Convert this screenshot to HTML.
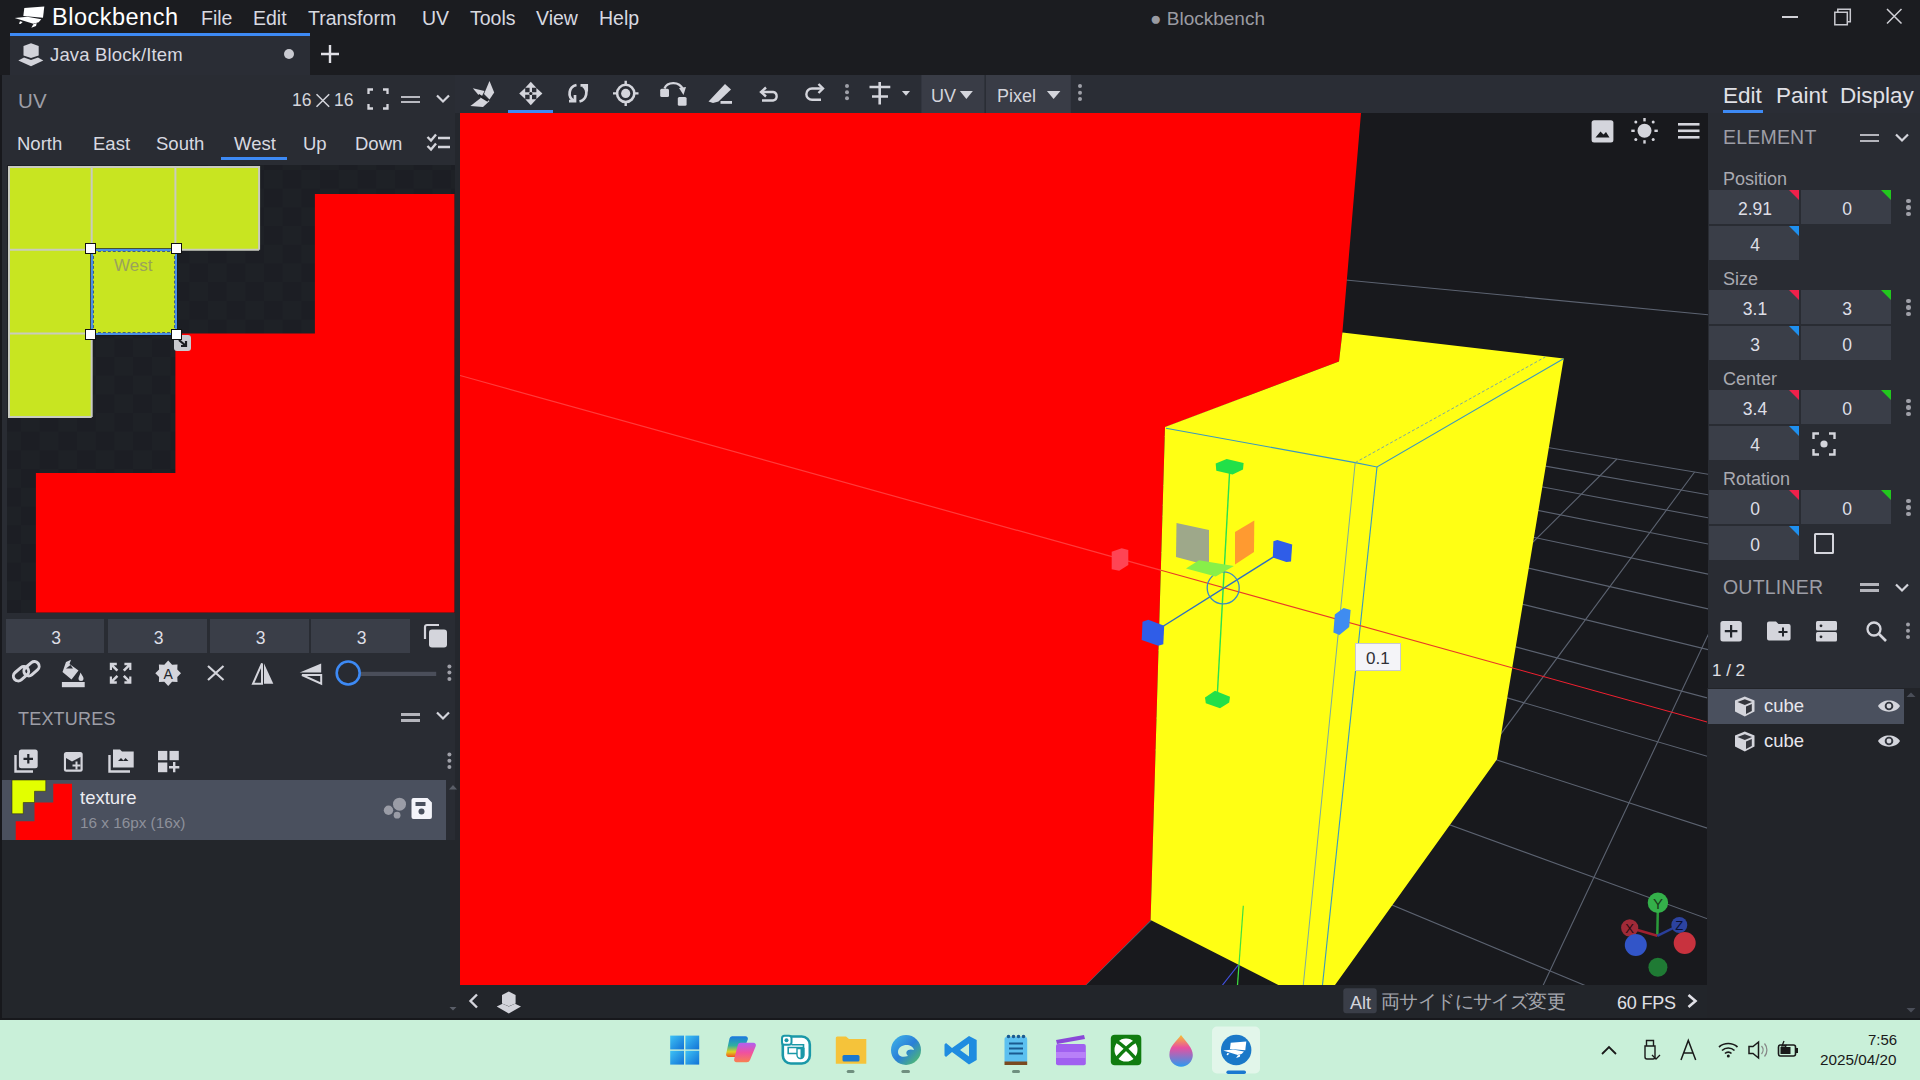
<!DOCTYPE html>
<html><head><meta charset="utf-8"><title>Blockbench</title>
<style>
*{box-sizing:border-box;margin:0;padding:0}
html,body{width:1920px;height:1080px;overflow:hidden;background:#1b1c20;font-family:"Liberation Sans",sans-serif;color:#d6d7de}
.a{position:absolute}
.t{position:absolute;white-space:nowrap;line-height:1}
svg{position:absolute;overflow:visible}
.ic{fill:#d4d5dc;stroke:none}
.st{fill:none;stroke:#d4d5dc}
.inp{position:absolute;background:#3a3e48;}
.inp span{position:absolute;left:2px;right:0;text-align:center;font-size:17.5px;top:8px;color:#dedee6}
.cr{position:absolute;top:0;right:0;width:0;height:0;border-style:solid;border-width:0 10px 10px 0}
.dots{position:absolute;width:4px}
.dots i{display:block;width:4.5px;height:4.5px;border-radius:2.25px;background:#9fa0a8;margin-bottom:2px}
.hdr{font-size:20.5px;color:#9d9ea6;letter-spacing:0.2px}
.lbl{font-size:17.5px;color:#a9aab1}
.menu{font-size:19.5px;color:#d8d9e0}
</style></head>
<body>
<!-- title bar -->
<div class="a" style="left:0;top:0;width:1920px;height:75px;background:#1b1c20"></div>
<!-- toolbar strip -->
<div class="a" style="left:0;top:75px;width:1920px;height:38px;background:#2a2d35"></div>
<!-- left panel -->
<div class="a" style="left:0;top:75px;width:2px;height:945px;background:#17181c"></div>
<div class="a" style="left:2px;top:75px;width:453px;height:945px;background:#292c33"></div>
<div class="a" style="left:455px;top:113px;width:5px;height:872px;background:#24272d"></div>
<div class="a" style="left:2px;top:840px;width:458px;height:178px;background:#23262b"></div>
<svg style="left:448px;top:1005px" width="10" height="8" viewBox="0 0 10 8"><path d="M1.5 2L5 5.5L8.5 2z" fill="#5a5e68"/></svg>
<div class="t" style="left:52px;top:6px;font-size:23.5px;color:#ffffff;letter-spacing:0.5px">Blockbench</div>
<div class="t menu" style="left:201px;top:9.2px">File</div>
<div class="t menu" style="left:253px;top:9.2px">Edit</div>
<div class="t menu" style="left:308px;top:9.2px">Transform</div>
<div class="t menu" style="left:422px;top:9.2px">UV</div>
<div class="t menu" style="left:470px;top:9.2px">Tools</div>
<div class="t menu" style="left:536px;top:9.2px">View</div>
<div class="t menu" style="left:599px;top:9.2px">Help</div>
<div class="t" style="left:1150px;top:9px;font-size:19px;color:#9a9ba2">&#9679; Blockbench</div>
<!-- tab -->
<div class="a" style="left:10px;top:33px;width:300px;height:42px;background:#2a2d35;border-top:3px solid #3d8af5"></div>
<div class="t" style="left:50px;top:46px;font-size:18.5px;color:#d8d9e0;letter-spacing:0.15px">Java Block/Item</div>
<div class="a" style="left:284px;top:49px;width:10px;height:10px;border-radius:5px;background:#c9cad1"></div>
<svg style="left:0;top:0" width="60" height="36" viewBox="0 0 60 36"><g fill="#ffffff"><path d="M24.3,8 L44.3,6.5 L43,17.7 L23.3,16 Z"/><path d="M14.7,18 L27.3,16.7 L41.3,19.3 L38.7,22.3 L33.3,23.7 Z"/><path d="M19,23.7 L20,21.3 L22.7,22 L20.5,24 Z"/><path d="M31.3,27.7 L33.3,24.3 L36.7,23 L36,26 Z"/></g></svg>
<svg style="left:0;top:36px" width="50" height="36" viewBox="0 36 50 36"><g fill="#d2d3da"><path d="M23.5,46 L31,43.3 L38.7,46 L38.7,55.5 L31,58 L23.5,55.5 Z"/><path d="M18.3,60.5 L24,57.5 L31,60 L38,57.5 L43.3,60.5 L31,66.3 Z"/></g></svg>
<svg style="left:320px;top:44px" width="20" height="20" viewBox="0 0 20 20"><path d="M10 1v18M1 10h18" stroke="#e0e0e6" stroke-width="2.4"/></svg>
<!-- toolbar icons -->
<svg style="left:460px;top:75px" width="640" height="38" viewBox="460 75 640 38">
<g fill="#d4d5dc">
<path d="M472.8,88.2 L484.5,91 L481,98 Z"/><path d="M470.4,106 L482,97 L489.5,101 L483,107 Z"/><path d="M489.5,81 L494.2,92.5 L489.5,99.5 L484,94 Z"/>
</g><path d="M478.5,95 L488,100.8" stroke="#1e2026" stroke-width="2.2"/>
<g fill="#d4d5dc">
<path d="M530.8,81.7 L536.3,87.8 L525.3,87.8 Z"/><path d="M530.8,105.3 L536.3,99.2 L525.3,99.2 Z"/>
<path d="M519.2,93.5 L525.2,88 L525.2,99 Z"/><path d="M542.4,93.5 L536.4,88 L536.4,99 Z"/>
</g><path d="M530.8,87 V100 M524.5,93.5 H537" stroke="#d4d5dc" stroke-width="2.4"/><circle cx="530.8" cy="93.5" r="1.6" fill="#1e2026"/>
<rect x="508" y="110" width="45" height="3" fill="#3d8af5"/>
<g fill="none" stroke="#d4d5dc" stroke-width="2.7">
<path d="M576.5,85 A8.5,8.5 0 0 0 574,100.8"/><path d="M579.5,101.5 A9.5,9 0 0 0 583,86"/>
<polyline points="569,101.2 575,101.2 575,95"/><polyline points="580.5,85.3 586.7,85.3 586.7,91.5"/>
</g>
<circle cx="625.7" cy="93.4" r="8.6" fill="none" stroke="#d4d5dc" stroke-width="2.6"/>
<circle cx="625.7" cy="93.4" r="4.6" fill="#d4d5dc"/>
<path d="M625.7,80.8v3.5M625.7,102.5v3.5M613,93.4h3.5M635,93.4h3.5" stroke="#d4d5dc" stroke-width="2.4"/>
<rect x="660.2" y="88.8" width="8.8" height="8.2" rx="1.5" fill="#d4d5dc"/>
<rect x="677.8" y="97" width="8.8" height="8.8" rx="1.5" fill="#d4d5dc"/>
<path d="M664.5,88.5 C667,82 679,80.5 683,89.5" fill="none" stroke="#d4d5dc" stroke-width="2.3"/>
<path d="M679,88 L686,87 L683.5,95 Z" fill="#d4d5dc"/>
<path d="M725,84 L731,89.5 L718.5,101.5 L713,103 L708.5,101.5 Z" fill="#d4d5dc"/>
<rect x="720.5" y="101" width="11.5" height="2.8" fill="#d4d5dc"/>
<g fill="none" stroke="#d4d5dc" stroke-width="2.4">
<path d="M761.5,92 H773 A4.3 4.3 0 0 1 773,100.5 H762"/><path d="M766,87.5 L761,92 L766,96.5"/>
<path d="M823,88.5 H812 A5.5 5.5 0 0 0 812,99.8 H821"/><path d="M818.5,84 L823,88.5 L818.5,93"/>
</g>
<g fill="#9fa0a8"><circle cx="847" cy="86.1" r="2"/><circle cx="847" cy="92.2" r="2"/><circle cx="847" cy="98.3" r="2"/></g>
<path d="M869.5,87 H890.3 M872,96.5 H888 M879.7,82 V104.4" stroke="#d4d5dc" stroke-width="2.6" fill="none"/>
<path d="M901.9,91 H910 L906,95.8 Z" fill="#d4d5dc"/>
<rect x="921.4" y="75" width="63" height="38" fill="#393c46"/>
<rect x="986" y="75" width="84.8" height="38" fill="#393c46"/>
<path d="M959.9,91.1 H972.9 L966.4,99 Z" fill="#d4d5dc"/>
<path d="M1046.9,91.1 H1060.4 L1053.6,99 Z" fill="#d4d5dc"/>
<g fill="#9fa0a8"><circle cx="1080" cy="86" r="2"/><circle cx="1080" cy="92.7" r="2"/><circle cx="1080" cy="99" r="2"/></g>
</svg>
<div class="t" style="left:931px;top:87px;font-size:18px;color:#d4d5dc">UV</div>
<div class="t" style="left:997px;top:87px;font-size:18px;color:#d4d5dc">Pixel</div>
<!-- window controls -->
<div class="a" style="left:1782px;top:16px;width:16px;height:1.5px;background:#d0d0d6"></div>
<svg style="left:1831.5px;top:6px" width="24" height="22" viewBox="0 0 24 22"><path d="M2.8 6.3h12.5v12.5H2.8z M5.8 6.3V3.3h12.5v12.5h-3" fill="none" stroke="#c8c8ce" stroke-width="1.5"/></svg>
<svg style="left:1885px;top:7px" width="20" height="20" viewBox="0 0 20 20"><path d="M2 2l14.5 14.5M16.5 2L2 16.5" stroke="#d0d0d6" stroke-width="1.5"/></svg>
<!-- right tabs -->
<div class="t" style="left:1723px;top:84.5px;font-size:22.5px;color:#e0e0e6">Edit</div>
<div class="t" style="left:1776px;top:84.5px;font-size:22.5px;color:#e0e0e6">Paint</div>
<div class="t" style="left:1840px;top:84.5px;font-size:22.5px;color:#e0e0e6">Display</div>
<div class="a" style="left:1723px;top:110px;width:40px;height:3px;background:#3d8af5"></div>



<!-- UV header -->
<div class="t hdr" style="left:18px;top:91px;font-size:20.5px">UV</div>
<div class="t" style="left:292px;top:92px;font-size:17.5px;color:#d4d5dc">16</div><div class="t" style="left:334px;top:92px;font-size:17.5px;color:#d4d5dc">16</div>
<svg style="left:314px;top:92px" width="18" height="17" viewBox="314 92 18 17"><path d="M316.5,94.2 L329.2,106.8 M329.2,94.2 L316.5,106.8" stroke="#d4d5dc" stroke-width="1.5"/></svg>
<svg style="left:367px;top:88px" width="22" height="22" viewBox="0 0 22 22"><path class="st" stroke="#b8b9c0" stroke-width="2.3" d="M1.5 6V1.5H6M16 1.5h4.5V6M20.5 16v4.5H16M6 20.5H1.5V16"/></svg>
<div class="a" style="left:401px;top:96px;width:19px;height:2.4px;background:#b8b9c0"></div>
<div class="a" style="left:401px;top:100.8px;width:19px;height:2.4px;background:#b8b9c0"></div>
<svg style="left:436px;top:94px" width="14" height="10" viewBox="0 0 14 10"><path class="st" stroke="#a9aab1" stroke-width="2.2" d="M1 1.5l6 6 6-6"/></svg>
<!-- face tabs -->
<div class="t" style="left:17px;top:135px;font-size:18.5px;color:#d8d9e0">North</div>
<div class="t" style="left:93px;top:135px;font-size:18.5px;color:#d8d9e0">East</div>
<div class="t" style="left:156px;top:135px;font-size:18.5px;color:#d8d9e0">South</div>
<div class="t" style="left:234px;top:135px;font-size:18.5px;color:#d8d9e0">West</div>
<div class="t" style="left:303px;top:135px;font-size:18.5px;color:#d8d9e0">Up</div>
<div class="t" style="left:355px;top:135px;font-size:18.5px;color:#d8d9e0">Down</div>
<div class="a" style="left:221px;top:157px;width:66px;height:3px;background:#3d8af5"></div>
<svg style="left:426px;top:133px" width="26" height="20" viewBox="0 0 26 20"><path class="st" stroke-width="2.4" d="M1.5 4l3.5 3.5L10 1.5M1.5 13l3.5 3.5L10 10.5"/><path class="st" stroke-width="2.6" d="M12 5h12M12 14h12"/></svg>
<!-- UV canvas -->
<div class="a" style="left:7px;top:165px;width:448px;height:448px;overflow:hidden;background-color:#1c1e24;background-image:conic-gradient(#1e2126 25%,transparent 25% 50%,#1e2126 50% 75%,transparent 75%);background-size:37.4px 37.4px;background-position:14px 5px">
<svg width="446.4" height="446.4" viewBox="0 0 448 448" style="left:1px;top:0.5px">
<polygon fill="#ff0000" points="308,28 448,28 448,448 28,448 28,308 168,308 168,168 308,168"/>
<polygon fill="#c8e521" points="0,0 252,0 252,84 168,84 168,168 84,168 84,252 0,252"/>
<g stroke="#c9cbbf" stroke-width="2" fill="none">
<path d="M1,1H252M0,84H252M0,168H84M0,252H84M1,0V252M84,0V252M168,0V84M252,0V84"/>
</g>
</svg>
</div>
<!-- west selection -->
<div class="a" style="left:89.5px;top:247.5px;width:88px;height:88px;border:1px solid rgba(20,24,30,0.7)"></div>
<div class="a" style="left:90.5px;top:248.5px;width:86px;height:86px;border:2px solid #4a8ee8"></div>
<div class="a" style="left:92.5px;top:250.5px;width:82px;height:82px;border:1px dashed #40607a"></div>
<div class="t" style="left:114px;top:257px;font-size:17px;color:#9aa25c">West</div>
<div class="a" style="left:174px;top:335px;width:17px;height:16px;background:#c9cacf;border-radius:3px"></div>
<svg style="left:176px;top:337px" width="13" height="12" viewBox="0 0 13 12"><path d="M3 3l7 6M10 4v5H5" stroke="#1a1b1f" stroke-width="2.2" fill="none"/></svg>
<div class="a" style="left:85px;top:243px;width:11px;height:11px;background:#fff;border:1.5px solid #111"></div>
<div class="a" style="left:171px;top:243px;width:11px;height:11px;background:#fff;border:1.5px solid #111"></div>
<div class="a" style="left:85px;top:329px;width:11px;height:11px;background:#fff;border:1.5px solid #111"></div>
<div class="a" style="left:171px;top:329px;width:11px;height:11px;background:#fff;border:1.5px solid #111"></div>

<!-- face inputs -->
<div class="inp" style="left:6px;top:619px;width:98px;height:34px"><span style="top:9px">3</span></div>
<div class="inp" style="left:108px;top:619px;width:99px;height:34px"><span style="top:9px">3</span></div>
<div class="inp" style="left:210px;top:619px;width:99px;height:34px"><span style="top:9px">3</span></div>
<div class="inp" style="left:311px;top:619px;width:99px;height:34px"><span style="top:9px">3</span></div>
<svg style="left:423px;top:624px" width="25" height="24" viewBox="0 0 25 24"><path class="st" stroke-width="2.2" d="M2 15V3a2 2 0 0 1 2-2h12"/><rect class="ic" x="6" y="5.5" width="18" height="18" rx="3"/></svg>
<!-- uv tool icons -->
<svg style="left:0;top:650px" width="460" height="200" viewBox="0 650 460 200">
<g fill="none" stroke="#d4d5dc" stroke-width="3">
<rect x="12.5" y="669" width="17" height="9.5" rx="4.75" transform="rotate(-40 21 673.7)"/>
<rect x="23" y="664" width="17" height="9.5" rx="4.75" transform="rotate(-40 31.5 668.7)"/>
</g>
<path d="M66,662 L71,659.8 L69.5,664 L78.5,670.5 L71.5,679.5 L62.5,672 Z" fill="#d4d5dc"/>
<path d="M66,668.5 L73,668.5 L70.5,665 Z" fill="#2a2d35"/>
<path d="M80.5,672.5 C82.5,676 83.5,677 83.5,678.5 A2.5 2.5 0 0 1 78.5,678.5 C78.5,677 79.5,676 80.5,672.5Z" fill="#d4d5dc"/>
<rect x="61.9" y="682" width="22.8" height="5.2" fill="#d4d5dc"/>
<g fill="#d4d5dc">
<path d="M109.8,662.8h7v2.5h-3l4.5,4.5-1.8,1.8-4.5-4.5v3h-2.2z"/>
<path d="M131.4,662.8h-7v2.5h3l-4.5,4.5 1.8,1.8 4.5-4.5v3h2.2z"/>
<path d="M109.8,683.7h7v-2.5h-3l4.5-4.5-1.8-1.8-4.5,4.5v-3h-2.2z"/>
<path d="M131.4,683.7h-7v-2.5h3l-4.5-4.5 1.8-1.8 4.5,4.5v-3h2.2z"/>
</g>
<path fill="#d4d5dc" d="M168.2,660.4 L172.1,664.8 L177.5,664.5 L177.3,669.6 L181,673.3 L177.3,677 L177.5,682.1 L172.1,681.8 L168.2,686.1 L164.3,681.8 L158.9,682.1 L159.1,677 L155.3,673.3 L159.1,669.6 L158.9,664.5 L164.3,664.8 Z"/>
<text x="168.2" y="679" font-size="14" text-anchor="middle" fill="#22252b" font-family="Liberation Sans">A</text>
<path d="M208,666 L223.5,680 M223.5,666 L208,680" stroke="#d4d5dc" stroke-width="2.2"/>
<path d="M262,663.4 L253,683.7 H262 Z" fill="none" stroke="#d4d5dc" stroke-width="2"/>
<path d="M264,663.4 L273.3,683.7 H264 Z" fill="#d4d5dc"/>
<path d="M321.2,663.4 L299.7,672.5 H321.2 Z" fill="#d4d5dc"/>
<path d="M321.2,675 H302 L321.2,683.7 Z" fill="none" stroke="#d4d5dc" stroke-width="2"/>
<rect x="360.8" y="671.8" width="75.4" height="4.2" fill="#4a4e5a"/>
<circle cx="348.2" cy="673" r="11.5" fill="#282b32" stroke="#3d8af5" stroke-width="2.6"/>
<g fill="#9fa0a8"><circle cx="449.4" cy="666.4" r="2"/><circle cx="449.4" cy="672.6" r="2"/><circle cx="449.4" cy="679" r="2"/></g>
<!-- textures icons -->
<path d="M15.5,755 V771.5 H33" fill="none" stroke="#d4d5dc" stroke-width="2.4"/>
<rect x="18.9" y="749.4" width="18.8" height="18.8" rx="2.5" fill="#d4d5dc"/>
<path d="M28.3,754 V763.5 M23.5,758.8 H33" stroke="#22252b" stroke-width="2.2"/>
<rect x="63.9" y="751.9" width="18.8" height="19.8" rx="2.5" fill="#d4d5dc"/>
<path d="M66,758 L72,761.5 L80.5,757 V769.5 H66 Z" fill="#2a2d35"/>
<path d="M76.5,761.5 V769.5 M72.5,765.5 H80.5" stroke="#d4d5dc" stroke-width="2"/>
<path d="M109.5,755 V771.5 H130" fill="none" stroke="#d4d5dc" stroke-width="2.4"/>
<path d="M113,749.4 H120 L122,751.5 H133.7 V767.5 H113 Z" fill="#d4d5dc"/>
<path d="M118,761 L121,758 L123.5,760.5 L125.5,758 L128.5,761 Z" fill="#22252b"/>
<g fill="#d4d5dc"><rect x="158" y="750.9" width="9.3" height="9.3"/><rect x="169.5" y="750.9" width="9.3" height="9.3"/><rect x="158" y="762.5" width="9.3" height="9.7"/></g>
<path d="M174.2,762 V772.2 M169,767.2 H179.3" stroke="#d4d5dc" stroke-width="2.4"/>
<g fill="#9fa0a8"><circle cx="449.4" cy="754.5" r="2"/><circle cx="449.4" cy="760.8" r="2"/><circle cx="449.4" cy="767" r="2"/></g>
</svg>
<!-- textures header -->
<div class="t hdr" style="left:18px;top:709.5px;font-size:18px">TEXTURES</div>
<div class="a" style="left:401px;top:713px;width:19px;height:2.5px;background:#b4b5bc"></div>
<div class="a" style="left:401px;top:719px;width:19px;height:2.5px;background:#b4b5bc"></div>
<svg style="left:436px;top:711px" width="14" height="10" viewBox="0 0 14 10"><path class="st" stroke="#a9aab1" stroke-width="2.2" d="M1 1.5l6 6 6-6"/></svg>
<!-- texture row -->
<div class="a" style="left:2px;top:780px;width:444px;height:60px;background:#4a505e"></div>
<svg style="left:12px;top:780px" width="60" height="60" viewBox="0 0 16 16" preserveAspectRatio="none"><polygon fill="#ff0000" points="11,1 16,1 16,16 1,16 1,11 6,11 6,6 11,6"/><polygon fill="#e2ff00" stroke="#2a2a10" stroke-width="0.15" points="0,0 9,0 9,3 6,3 6,6 3,6 3,9 0,9"/></svg>
<div class="t" style="left:80px;top:789px;font-size:18.5px;color:#ececf2">texture</div>
<div class="t" style="left:80px;top:815px;font-size:15.3px;color:#8e919b">16 x 16px (16x)</div>
<svg style="left:380px;top:795px" width="56" height="28" viewBox="380 795 56 28">
<circle cx="399.5" cy="804.2" r="6.5" fill="#9a9ca6"/><circle cx="388.5" cy="810.3" r="4.7" fill="#9a9ca6"/><circle cx="397.1" cy="815.2" r="3.4" fill="#9a9ca6"/>
<path d="M413.5,798 H427.5 L431.9,802.5 V817 A2 2 0 0 1 429.9,819.1 H413.5 A2 2 0 0 1 411.5,817 V800 A2 2 0 0 1 413.5,798 Z" fill="#f4f4fa"/>
<rect x="415.5" y="802" width="10" height="4" fill="#4a505e"/><circle cx="421.5" cy="811.5" r="3" fill="#4a505e"/>
</svg>
<svg style="left:448px;top:783px" width="10" height="8" viewBox="0 0 10 8"><path d="M1 6.5L5 2l4 4.5z" fill="#5a5e68"/></svg>



<!-- viewport -->
<div class="a" style="left:460px;top:113px;width:1248px;height:872px;background:#18191d;overflow:hidden">
<svg width="1920" height="1080" style="left:-460px;top:-113px">
<g stroke="#5c6371" stroke-width="1.1">
<line x1="2004.1" y1="1160.1" x2="352.4" y2="471.8"/>
<line x1="1996.0" y1="1023.9" x2="433.8" y2="454.7"/>
<line x1="1989.7" y1="919.7" x2="507.3" y2="439.2"/>
<line x1="1984.8" y1="837.4" x2="574.0" y2="425.1"/>
<line x1="1980.8" y1="770.7" x2="634.7" y2="412.3"/>
<line x1="1977.5" y1="715.6" x2="690.3" y2="400.6"/>
<line x1="1974.7" y1="669.3" x2="741.3" y2="389.8"/>
<line x1="1972.3" y1="629.9" x2="788.4" y2="379.9"/>
<line x1="1970.3" y1="595.9" x2="831.9" y2="370.7"/>
<line x1="1968.5" y1="566.3" x2="872.2" y2="362.2"/>
<line x1="1966.9" y1="540.3" x2="909.8" y2="354.3"/>
<line x1="1965.6" y1="517.2" x2="944.7" y2="346.9"/>
<line x1="1682.8" y1="1408.6" x2="1868.2" y2="501.0"/>
<line x1="1417.4" y1="1252.4" x2="1778.2" y2="485.9"/>
<line x1="1208.5" y1="1129.4" x2="1694.6" y2="472.0"/>
<line x1="1039.9" y1="1030.2" x2="1616.9" y2="459.0"/>
<line x1="900.9" y1="948.4" x2="1544.3" y2="446.9"/>
<line x1="784.3" y1="879.8" x2="1476.5" y2="435.6"/>
<line x1="685.2" y1="821.4" x2="1412.9" y2="425.0"/>
<line x1="599.8" y1="771.2" x2="1353.3" y2="415.1"/>
<line x1="525.5" y1="727.5" x2="1297.1" y2="405.7"/>
<line x1="460.3" y1="689.1" x2="1244.2" y2="396.9"/>
<line x1="402.6" y1="655.2" x2="1194.2" y2="388.5"/>
<line x1="351.2" y1="624.9" x2="1147.0" y2="380.6"/>
<line x1="305.1" y1="597.8" x2="1102.3" y2="373.2"/>
<line x1="263.5" y1="573.3" x2="1059.8" y2="366.1"/>
<line x1="225.7" y1="551.1" x2="1019.5" y2="359.4"/>
<line x1="191.4" y1="530.9" x2="981.2" y2="353.0"/>
<line x1="1954.8" y1="338.4" x2="1288.2" y2="274.5"/>
</g>
<line x1="460" y1="375.5" x2="1707" y2="722" stroke="#f02030" stroke-width="1"/>
<polygon fill="#ff0000" points="460,113 1361,113 1342.4,332.5 1339,361.6 1165,427 1150.6,920 1085.6,985 460,985"/>
<line x1="460" y1="375.5" x2="1165" y2="571.4" stroke="#ff3b3b" stroke-width="1.2"/>
<polygon fill="#ffff14" points="1165,427 1339,361.6 1342.4,332.5 1563.7,358.5 1497,759.3 1335,985 1278.3,985 1150.6,920"/>
<g fill="none" stroke="#3a98c0" stroke-width="1.1">
<polyline points="1166,428.3 1355.2,462.6 1377,467 1563.5,358.7"/>
<line x1="1377" y1="467" x2="1322.5" y2="985"/>
<line x1="1355.2" y1="462.6" x2="1303.3" y2="985" stroke="#6aa0b0" stroke-width="0.9"/>
<line x1="1355.2" y1="462.6" x2="1545.2" y2="357" stroke="#6aa0b0" stroke-width="0.9" stroke-dasharray="3,2"/>
</g>
<!-- red axis line over yellow -->
<line x1="1161" y1="570.3" x2="1512" y2="667.8" stroke="#e83a28" stroke-width="1.1"/>
<!-- world axis lines bottom -->
<line x1="1243.3" y1="905.8" x2="1237.5" y2="985" stroke="#3ee040" stroke-width="1.2"/>
<line x1="1238.3" y1="965" x2="1222.5" y2="985" stroke="#4050e0" stroke-width="1.2"/>
<!-- gizmo -->
<g>
<line x1="1229.7" y1="470" x2="1217.3" y2="695" stroke="#28e050" stroke-width="1.4"/>
<line x1="1153.2" y1="632.5" x2="1282.9" y2="551" stroke="#2f6fc0" stroke-width="1.4"/>
<circle cx="1223.2" cy="587.9" r="16" fill="none" stroke="#3a88c8" stroke-width="1.3"/>
<polygon fill="#9ea88a" points="1176.5,523 1209,530 1209,565.8 1176,557"/>
<polygon fill="#ff9a30" points="1235,532 1254.3,520.4 1254,552 1235,564.5"/>
<polygon fill="#88f048" points="1186,568.6 1198.9,560.2 1233.9,566 1215.7,576.4"/>
<polygon fill="#22e048" points="1215.7,463.6 1226.7,459 1243.6,463 1243,469.4 1232.6,474.6 1216.3,470.7"/>
<polygon fill="#22e048" points="1205,697.5 1215,690.8 1230,696.7 1229.2,702.5 1220,708.3 1205.8,703.3"/>
<polygon fill="#2f5de8" points="1142.5,621.7 1148.3,619.7 1164.2,625.8 1163.3,644.2 1158.3,645.8 1141.7,640"/>
<polygon fill="#2f5de8" points="1273.4,541.3 1277.3,540 1292.2,544.6 1291,561.5 1286.4,562.1 1272.8,557.6"/>
<polygon fill="#3f8cf0" points="1334.8,614.5 1343.6,608 1350.6,610 1349.2,627 1339.4,634.9 1333.4,632.6"/>
<polygon fill="#ff4454" points="1111.7,551.7 1121.7,548.3 1128.3,550 1128.3,565 1119.2,570.8 1111.7,569.2"/>
</g>
<!-- axis navigator -->
<g>
<line x1="1657.3" y1="935.8" x2="1657.9" y2="905" stroke="#2a9a3a" stroke-width="2.5"/>
<line x1="1657.3" y1="935.8" x2="1629.7" y2="927.8" stroke="#a02030" stroke-width="2.5"/>
<line x1="1657.3" y1="935.8" x2="1679.3" y2="925" stroke="#2a3f9a" stroke-width="2.5"/>
<circle cx="1657.9" cy="902.8" r="10.2" fill="#34b04a"/>
<circle cx="1629.7" cy="927.8" r="8.6" fill="#a02a38"/>
<circle cx="1679.3" cy="925" r="8" fill="#2c43a0"/>
<circle cx="1635.8" cy="945" r="11" fill="#3255c8"/>
<circle cx="1684.7" cy="943" r="11" fill="#c8323e"/>
<circle cx="1657.9" cy="967.3" r="9.5" fill="#1f7a34"/>
<text x="1657.9" y="908.5" font-size="15" text-anchor="middle" fill="#1a3a1a" font-family="Liberation Sans">Y</text>
<text x="1629.7" y="932.5" font-size="13" text-anchor="middle" fill="#2a0a10" font-family="Liberation Sans">X</text>
<text x="1679.3" y="929.5" font-size="13" text-anchor="middle" fill="#0a1030" font-family="Liberation Sans">Z</text>
</g>
</svg>
<!-- 0.1 label -->
<div class="a" style="left:895px;top:530px;width:46px;height:28px;background:#f4f4f8;border:1px solid #c8c8d0"><span class="t" style="left:10px;top:6px;font-size:17px;color:#303036">0.1</span></div>
</div>

<!-- right panel -->
<div class="a" style="left:1708px;top:113px;width:212px;height:907px;background:#292c33"></div>
<div class="a" style="left:1707px;top:688px;width:213px;height:332px;background:#222429"></div>
<div class="t hdr" style="left:1723px;top:128px;font-size:19.5px">ELEMENT</div>
<div class="a" style="left:1860px;top:133.5px;width:19px;height:2.5px;background:#b4b5bc"></div><div class="a" style="left:1860px;top:139.5px;width:19px;height:2.5px;background:#b4b5bc"></div>
<svg style="left:1895px;top:133px" width="14" height="10" viewBox="0 0 14 10"><path class="st" stroke="#a9aab1" stroke-width="2.2" d="M1 1.5l6 6 6-6"/></svg>
<div class="t lbl" style="left:1723px;top:170px;font-size:18px">Position</div>
<div class="inp" style="left:1709px;top:190px;width:90px;height:34px"><i class="cr" style="border-color:transparent #f0204a transparent transparent"></i><span style="top:8.5px">2.91</span></div>
<div class="inp" style="left:1801px;top:190px;width:90px;height:34px"><i class="cr" style="border-color:transparent #22c81e transparent transparent"></i><span style="top:8.5px">0</span></div>
<div class="inp" style="left:1709px;top:226px;width:90px;height:34px"><i class="cr" style="border-color:transparent #1e90f0 transparent transparent"></i><span style="top:8.5px">4</span></div>
<div class="dots" style="left:1906px;top:198.5px"><i></i><i></i><i></i></div>
<div class="t lbl" style="left:1723px;top:270px;font-size:18px">Size</div>
<div class="inp" style="left:1709px;top:290px;width:90px;height:34px"><i class="cr" style="border-color:transparent #f0204a transparent transparent"></i><span style="top:8.5px">3.1</span></div>
<div class="inp" style="left:1801px;top:290px;width:90px;height:34px"><i class="cr" style="border-color:transparent #22c81e transparent transparent"></i><span style="top:8.5px">3</span></div>
<div class="inp" style="left:1709px;top:326px;width:90px;height:34px"><i class="cr" style="border-color:transparent #1e90f0 transparent transparent"></i><span style="top:8.5px">3</span></div>
<div class="inp" style="left:1801px;top:326px;width:90px;height:34px"><span style="top:8.5px">0</span></div>
<div class="dots" style="left:1906px;top:298.5px"><i></i><i></i><i></i></div>
<div class="t lbl" style="left:1723px;top:370px;font-size:18px">Center</div>
<div class="inp" style="left:1709px;top:390px;width:90px;height:34px"><i class="cr" style="border-color:transparent #f0204a transparent transparent"></i><span style="top:8.5px">3.4</span></div>
<div class="inp" style="left:1801px;top:390px;width:90px;height:34px"><i class="cr" style="border-color:transparent #22c81e transparent transparent"></i><span style="top:8.5px">0</span></div>
<div class="inp" style="left:1709px;top:426px;width:90px;height:34px"><i class="cr" style="border-color:transparent #1e90f0 transparent transparent"></i><span style="top:8.5px">4</span></div>
<div class="dots" style="left:1906px;top:398.5px"><i></i><i></i><i></i></div>
<div class="t lbl" style="left:1723px;top:470px;font-size:18px">Rotation</div>
<div class="inp" style="left:1709px;top:490px;width:90px;height:34px"><i class="cr" style="border-color:transparent #f0204a transparent transparent"></i><span style="top:8.5px">0</span></div>
<div class="inp" style="left:1801px;top:490px;width:90px;height:34px"><i class="cr" style="border-color:transparent #22c81e transparent transparent"></i><span style="top:8.5px">0</span></div>
<div class="inp" style="left:1709px;top:526px;width:90px;height:34px"><i class="cr" style="border-color:transparent #1e90f0 transparent transparent"></i><span style="top:8.5px">0</span></div>
<div class="dots" style="left:1906px;top:498.5px"><i></i><i></i><i></i></div>
<svg style="left:1812px;top:432px" width="24" height="24" viewBox="0 0 24 24"><path class="st" stroke-width="2.4" d="M1.5 7V1.5H7M17 1.5h5.5V7M22.5 17v5.5H17M7 22.5H1.5V17"/><circle cx="12" cy="12" r="3.6" class="ic"/></svg>
<div class="a" style="left:1813.5px;top:533px;width:20.5px;height:20.5px;border:2.4px solid #d4d5dc;border-radius:1.5px"></div>
<div class="t hdr" style="left:1723px;top:578px;font-size:19.5px">OUTLINER</div>
<div class="a" style="left:1860px;top:583px;width:19px;height:2.5px;background:#b4b5bc"></div><div class="a" style="left:1860px;top:589px;width:19px;height:2.5px;background:#b4b5bc"></div>
<svg style="left:1895px;top:583px" width="14" height="10" viewBox="0 0 14 10"><path class="st" stroke="#a9aab1" stroke-width="2.2" d="M1 1.5l6 6 6-6"/></svg>
<svg style="left:1707px;top:610px" width="213" height="150" viewBox="1707 610 213 150">
<rect x="1720.4" y="621" width="21.4" height="20.5" rx="2.5" fill="#d4d5dc"/>
<path d="M1731.1,625 V637.5 M1724.8,631.2 H1737.4" stroke="#22252b" stroke-width="2.2"/>
<path d="M1767,623.5 A2 2 0 0 1 1769,621.5 H1776 L1778.5,624 H1788.5 A2 2 0 0 1 1790.6,626 V638.5 A2 2 0 0 1 1788.5,640.5 H1769 A2 2 0 0 1 1767,638.5 Z" fill="#d4d5dc"/>
<path d="M1783,627.5 V636.5 M1778.5,632 H1787.5" stroke="#22252b" stroke-width="2"/>
<rect x="1816" y="621" width="21" height="9.5" rx="1.5" fill="#d4d5dc"/><rect x="1816" y="632" width="21" height="9.5" rx="1.5" fill="#d4d5dc"/>
<circle cx="1821" cy="625.8" r="1.4" fill="#22252b"/><circle cx="1821" cy="636.8" r="1.4" fill="#22252b"/>
<circle cx="1874" cy="629" r="6.5" fill="none" stroke="#d4d5dc" stroke-width="2.3"/><path d="M1878.5,633.5 L1886,641" stroke="#d4d5dc" stroke-width="2.6"/>
<g fill="#9fa0a8"><circle cx="1908" cy="624.5" r="2"/><circle cx="1908" cy="630.8" r="2"/><circle cx="1908" cy="637" r="2"/></g>
<path d="M1906.5,697 L1911,692.5 L1915.5,697 Z" fill="#4a4e58"/>
<path d="M1906.5,1008 L1911,1012.5 L1915.5,1008 Z" fill="#4a4e58"/>
</svg>
<div class="t" style="left:1712px;top:661.5px;font-size:17px;color:#e0e0e6">1 / 2</div>
<div class="a" style="left:1708px;top:689px;width:196px;height:35px;background:#4a505e"></div>
<svg style="left:1734px;top:695.5px" width="22" height="21" viewBox="0 0 22 21"><path d="M10.8 0.5 L20.5 4.5 V15.5 L10.8 20.5 L1 15.5 V4.5 Z" fill="#d4d5dc"/><path d="M3.5 6 L10.8 9 L18 6 L10.8 3.2 Z" fill="#22252b" opacity="0.9"/><path d="M12 10.5 L17.8 8 V15 L12 18 Z" fill="#22252b" opacity="0.9"/></svg>
<div class="t" style="left:1764px;top:697px;font-size:18.5px;color:#e6e6ec">cube</div>
<svg style="left:1877px;top:696.5px" width="24" height="18" viewBox="0 0 24 18"><path d="M1 9 C5 1.5 19 1.5 23 9 C19 16.5 5 16.5 1 9Z" fill="#d4d5dc"/><circle cx="12" cy="9" r="4.3" fill="#33363e"/><circle cx="12" cy="9" r="2.4" fill="#d4d5dc"/></svg>
<svg style="left:1734px;top:730.5px" width="22" height="21" viewBox="0 0 22 21"><path d="M10.8 0.5 L20.5 4.5 V15.5 L10.8 20.5 L1 15.5 V4.5 Z" fill="#d4d5dc"/><path d="M3.5 6 L10.8 9 L18 6 L10.8 3.2 Z" fill="#22252b" opacity="0.9"/><path d="M12 10.5 L17.8 8 V15 L12 18 Z" fill="#22252b" opacity="0.9"/></svg>
<div class="t" style="left:1764px;top:731.7px;font-size:18.5px;color:#e6e6ec">cube</div>
<svg style="left:1877px;top:731.5px" width="24" height="18" viewBox="0 0 24 18"><path d="M1 9 C5 1.5 19 1.5 23 9 C19 16.5 5 16.5 1 9Z" fill="#d4d5dc"/><circle cx="12" cy="9" r="4.3" fill="#33363e"/><circle cx="12" cy="9" r="2.4" fill="#d4d5dc"/></svg>

<!-- status bar -->
<div class="a" style="left:460px;top:985px;width:1247px;height:34px;background:#22252a"></div>
<div class="a" style="left:0;top:1018px;width:1920px;height:2px;background:#17181c"></div>
<svg style="left:460px;top:985px" width="1250" height="35" viewBox="460 985 1250 35">
<path d="M477,994.5 L470.5,1001 L477,1007.5" fill="none" stroke="#d4d5dc" stroke-width="2.4"/>
<g fill="#d2d3da"><path d="M502,995 L508.8,991.6 L515.6,995 L515.6,1003.5 L508.8,1006.3 L502,1003.5 Z"/><path d="M496.7,1006.5 L502.5,1003.8 L508.8,1006.5 L515,1003.8 L521,1006.5 L508.8,1013.6 Z"/></g>
<rect x="1343.3" y="988.3" width="33.4" height="25" rx="3" fill="#3a3e48"/>
<path d="M1688.5,995 L1695.5,1001 L1688.5,1007" fill="none" stroke="#e0e0e6" stroke-width="2.6"/>
</svg>
<div class="t" style="left:1350px;top:994px;font-size:18px;color:#d4d5dc">Alt</div>
<div class="t" style="left:1381px;top:992.5px;font-size:18.5px;color:#a4a5ad;letter-spacing:-0.6px">両サイドにサイズ変更</div>
<div class="t" style="left:1617px;top:994px;font-size:18px;color:#e0e0e6;letter-spacing:-0.2px">60 FPS</div>
<!-- viewport icons -->
<svg style="left:1585px;top:113px" width="120" height="36" viewBox="1585 113 120 36">
<rect x="1591.6" y="120.2" width="21.8" height="22.4" rx="2.5" fill="#d4d5dc"/>
<path d="M1595.5,137.5 L1600.5,131.5 L1603.5,134.5 L1606,132 L1609.5,137.5 Z" fill="#1a1b1f"/>
<circle cx="1644.5" cy="130.8" r="7" fill="#d4d5dc"/>
<g fill="#d4d5dc"><rect x="1643.3" y="118" width="2.4" height="3.4"/><rect x="1643.3" y="140.2" width="2.4" height="3.4"/><rect x="1631.3" y="129.6" width="3.4" height="2.4"/><rect x="1654.4" y="129.6" width="3.4" height="2.4"/>
<circle cx="1635.8" cy="122.1" r="1.5"/><circle cx="1653.2" cy="122.1" r="1.5"/><circle cx="1635.8" cy="139.5" r="1.5"/><circle cx="1653.2" cy="139.5" r="1.5"/></g>
<g fill="#d4d5dc"><rect x="1678" y="123" width="21.5" height="2.6"/><rect x="1678" y="129.5" width="21.5" height="2.6"/><rect x="1678" y="136" width="21.5" height="2.6"/></g>
</svg>

<!-- taskbar -->
<div class="a" style="left:0;top:1020px;width:1920px;height:60px;background:#c9f0d9"></div>
<svg style="left:0;top:1020px" width="1920" height="60" viewBox="0 1020 1920 60">
<defs>
<linearGradient id="gw" x1="0" y1="0" x2="1" y2="1"><stop offset="0" stop-color="#3ec2f5"/><stop offset="1" stop-color="#1272d6"/></linearGradient>
<linearGradient id="gc1" x1="0" y1="0" x2="0" y2="1"><stop offset="0" stop-color="#1a78e0"/><stop offset="0.45" stop-color="#30b0a0"/><stop offset="0.75" stop-color="#e0d020"/><stop offset="1" stop-color="#f05020"/></linearGradient><linearGradient id="gc2" x1="0" y1="0" x2="0" y2="1"><stop offset="0" stop-color="#b060f0"/><stop offset="0.5" stop-color="#f050a0"/><stop offset="1" stop-color="#f88050"/></linearGradient>
<linearGradient id="ge" x1="0" y1="0" x2="1" y2="1"><stop offset="0" stop-color="#40b8e8"/><stop offset="0.5" stop-color="#2a7fd8"/><stop offset="1" stop-color="#58c858"/></linearGradient>
<linearGradient id="gp" x1="0" y1="0" x2="0" y2="1"><stop offset="0" stop-color="#f8c030"/><stop offset="0.4" stop-color="#e850a0"/><stop offset="1" stop-color="#2a9af0"/></linearGradient>
</defs>
<g fill="url(#gw)"><rect x="670.2" y="1035.6" width="13.8" height="13.8"/><rect x="685.4" y="1035.6" width="13.8" height="13.8"/><rect x="670.2" y="1050.8" width="13.8" height="13.8"/><rect x="685.4" y="1050.8" width="13.8" height="13.8"/></g>
<path d="M732,1036.3 H745.5 A2.5 2.5 0 0 1 747.8,1039.5 L741.5,1055 A3 3 0 0 1 738.8,1057 H728.5 A2.5 2.5 0 0 1 726.2,1053.8 L729.5,1038.5 A3 3 0 0 1 732,1036.3 Z" fill="url(#gc1)"/>
<path d="M740.5,1042.8 H753.5 A2.5 2.5 0 0 1 755.8,1046 L750,1060 A3.5 3.5 0 0 1 746.8,1062.3 H736.5 A2.5 2.5 0 0 1 734.2,1059 L737.8,1045 A3 3 0 0 1 740.5,1042.8 Z" fill="url(#gc2)"/>
<rect x="782.8" y="1036.5" width="27" height="27" rx="8" fill="#ffffff" stroke="#1a98a8" stroke-width="2.6"/>
<rect x="782" y="1035.7" width="9.5" height="9" rx="2.5" fill="#ffffff" stroke="#1a98a8" stroke-width="2"/>
<circle cx="786.5" cy="1040.2" r="2" fill="#1a98a8"/>
<path d="M791.5,1044.8 H803.5 V1047.5 H788.2 V1053.5 H797" fill="none" stroke="#1a98a8" stroke-width="1.6"/>
<path d="M797,1048.5 H804 V1055 A3.5 3.5 0 0 1 800.5,1058.5 A3.5 3.5 0 0 1 797,1055 Z" fill="#ffffff" stroke="#1a98a8" stroke-width="1.4"/>
<path d="M800.5,1048.5 H804 V1055 A3.5 3.5 0 0 1 800.5,1058.5 Z" fill="#1a98a8"/>
<path d="M835.8,1038 A1.5 1.5 0 0 1 837.3,1036.4 H846 L849,1039 H866.3 V1063.75 H835.8 Z" fill="#f5c33a"/>
<rect x="842.5" y="1055" width="17" height="6.5" rx="1.5" fill="#1a78d0"/>
<rect x="846.7" y="1070" width="7.8" height="3" rx="1.5" fill="#6f8f7f"/>
<circle cx="906" cy="1050" r="15" fill="url(#ge)"/>
<path d="M898,1052 C898,1044 912,1042 914,1050 C908,1048 904,1052 908,1056 C902,1058 898,1056 898,1052Z" fill="#c9f0d9"/>
<rect x="901.4" y="1070" width="8.6" height="3" rx="1.5" fill="#6f8f7f"/>
<path d="M969,1036 L976.7,1040 V1060 L969,1064.5 L952,1052 L946,1057 L944.5,1055.5 V1044.5 L946,1043 L952,1048 Z M969,1043.5 L960,1050 L969,1056.5 Z" fill="#1f8ce0"/>
<rect x="1004.5" y="1037" width="22.7" height="26" rx="2" fill="#5cc0f0"/>
<rect x="1004.5" y="1061.5" width="22.7" height="3.5" fill="#7a4a20"/>
<g fill="#1a5a90"><circle cx="1008.5" cy="1036.5" r="1.8"/><circle cx="1013.5" cy="1036.5" r="1.8"/><circle cx="1018.5" cy="1036.5" r="1.8"/><circle cx="1023.5" cy="1036.5" r="1.8"/>
<rect x="1009" y="1042.5" width="14" height="2"/><rect x="1009" y="1047.5" width="14" height="2"/><rect x="1009" y="1052.5" width="14" height="2"/></g>
<rect x="1012" y="1070" width="8" height="3" rx="1.5" fill="#6f8f7f"/>
<path d="M1056,1040 L1084,1035 L1085,1039 L1057,1044 Z" fill="#8a48d8"/>
<rect x="1056" y="1044" width="29.8" height="21.3" rx="2" fill="#a060f0"/>
<rect x="1056" y="1052" width="29.8" height="6" fill="#b880f8"/>
<rect x="1110.8" y="1034.8" width="30.5" height="30.5" rx="4" fill="#107c10"/>
<circle cx="1126" cy="1050" r="11.5" fill="#ffffff"/>
<path d="M1116,1041 C1122,1044 1126,1048 1136,1059 M1136,1041 C1130,1044 1126,1048 1116,1059" stroke="#107c10" stroke-width="3.4" fill="none"/>
<path d="M1181,1035 C1186,1042 1193,1048 1192.8,1055 A11.7 11.7 0 0 1 1169.4,1055 C1169.4,1046 1176,1042 1181,1035Z" fill="url(#gp)"/>
<rect x="1212" y="1026.5" width="48" height="47" rx="5" fill="#e2f6ea"/>
<circle cx="1236.2" cy="1050" r="15.2" fill="#1a78c8"/>
<g fill="#ffffff" transform="translate(1223.2,1041.5) scale(0.78) translate(-14.7,-6.5)"><path d="M24.3,8 L44.3,6.5 L43,17.7 L23.3,16 Z"/><path d="M14.7,18 L27.3,16.7 L41.3,19.3 L38.7,22.3 L33.3,23.7 Z"/><path d="M19,23.7 L20,21.3 L22.7,22 L20.5,24 Z"/><path d="M31.3,27.7 L33.3,24.3 L36.7,23 L36,26 Z"/></g>
<rect x="1226.4" y="1070.5" width="19.6" height="3.5" rx="1.75" fill="#1a78d0"/>
<path d="M1602,1054 L1609,1047 L1616,1054" fill="none" stroke="#1a1a1a" stroke-width="1.8"/>
<path d="M1645,1046 V1057 A2 2 0 0 0 1647,1059 H1653 A2 2 0 0 0 1655,1057 V1046 Z M1646.5,1040.5 H1653.5 V1046 H1646.5 Z" fill="none" stroke="#1a1a1a" stroke-width="1.4"/>
<path d="M1652,1055 L1656,1059 L1660,1055" fill="none" stroke="#1a1a1a" stroke-width="1.3"/>
<path d="M1681,1060 L1688.3,1040.5 L1695.7,1060 M1683.5,1053 H1693" fill="none" stroke="#1a1a1a" stroke-width="1.5"/>
<path d="M1719,1047 A14 14 0 0 1 1737.5,1047 M1722,1050.5 A9 9 0 0 1 1734.5,1050.5 M1725,1053.5 A4.5 4.5 0 0 1 1731.5,1053.5" fill="none" stroke="#1a1a1a" stroke-width="1.7"/>
<circle cx="1728.3" cy="1056" r="1.5" fill="#1a1a1a"/>
<path d="M1749,1046.5 H1753 L1758.5,1042 V1058 L1753,1053.5 H1749 Z" fill="none" stroke="#1a1a1a" stroke-width="1.5"/>
<path d="M1761.5,1046 A6 6 0 0 1 1761.5,1054 M1764.5,1043.5 A10 10 0 0 1 1764.5,1056.5" fill="none" stroke="#888" stroke-width="1.3"/>
<rect x="1778.5" y="1045" width="17" height="11" rx="2" fill="none" stroke="#1a1a1a" stroke-width="1.6"/>
<rect x="1796" y="1048" width="2" height="5" fill="#1a1a1a"/><rect x="1780.5" y="1047" width="10" height="7" fill="#1a1a1a"/>
<path d="M1784,1041 L1782,1046 L1786,1045.5 L1784.5,1050" stroke="#1a1a1a" stroke-width="1.3" fill="none"/>
</svg>
<div class="t" style="left:1868px;top:1032px;font-size:15px;color:#1a1a1a">7:56</div>
<div class="t" style="left:1820px;top:1052px;font-size:15.3px;color:#1a1a1a">2025/04/20</div>
</body></html>
